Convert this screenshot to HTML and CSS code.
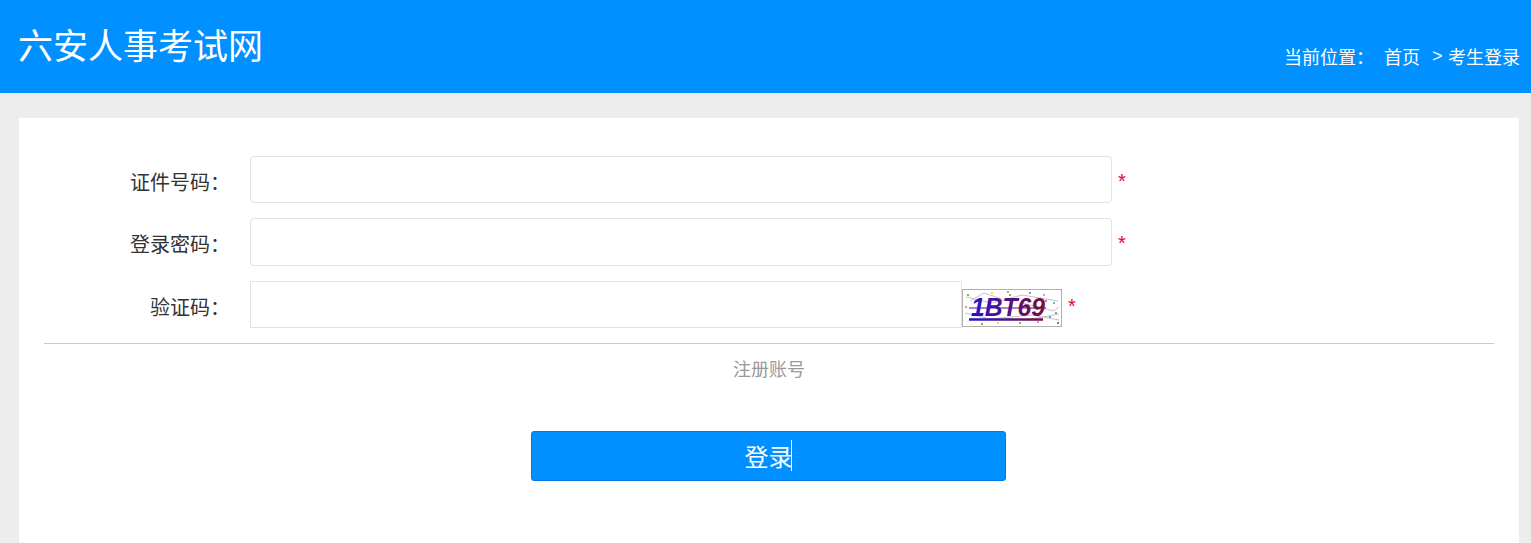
FILE: index.html
```html
<!DOCTYPE html>
<html lang="zh-CN">
<head>
<meta charset="utf-8">
<title>六安人事考试网</title>
<link rel="stylesheet" href="styles.css">
</head>
<body>
<header class="top">
  <h1 class="brand">六安人事考试网</h1>
  <nav class="crumbs"><span class="crumb-label">当前位置：</span><a class="crumb-home">首页</a><span class="crumb-sep">&gt;</span><span>考生登录</span></nav>
</header>
<main class="card">
  <form class="form">
    <div class="row">
      <label class="label">证件号码：</label>
      <input class="field" type="text">
      <span class="req">*</span>
    </div>
    <div class="row row-tall">
      <label class="label">登录密码：</label>
      <input class="field" type="password">
      <span class="req">*</span>
    </div>
    <div class="row">
      <label class="label">验证码：</label>
      <input class="field field-code" type="text">
      <svg class="captcha" width="100" height="38" viewBox="0 0 100 38">
        <rect x="0.5" y="0.5" width="99" height="37" fill="#fff" stroke="#b0b0b0"/>
        <g stroke="#c4c4c4" stroke-width="1" fill="none">
          <path d="M4 8 L30 14 L60 6 L96 12"/>
          <path d="M3 24 L28 30 L70 26 L97 31"/>
          <path d="M60 14 L92 22 L97 18"/>
          <path d="M8 12 L22 4 L40 10"/>
          <path d="M70 30 L97 25"/>
        </g>
        <g>
          <circle cx="6" cy="6" r="1" fill="#3a3"/><circle cx="14" cy="12" r="1" fill="#e66"/>
          <circle cx="30" cy="4" r="1" fill="#fb3"/><circle cx="48" cy="6" r="1" fill="#3a3"/>
          <circle cx="68" cy="4" r="1" fill="#66d"/><circle cx="82" cy="6" r="1" fill="#d6d"/>
          <circle cx="92" cy="14" r="1" fill="#3aa"/><circle cx="94" cy="24" r="1" fill="#3a3"/>
          <circle cx="84" cy="12" r="1" fill="#e44"/><circle cx="10" cy="30" r="1" fill="#3a3"/>
          <circle cx="36" cy="34" r="1" fill="#fb3"/><circle cx="58" cy="34" r="1" fill="#3a3"/>
          <circle cx="76" cy="33" r="1" fill="#d6d"/><circle cx="96" cy="34" r="1" fill="#366"/>
          <circle cx="4" cy="18" r="1" fill="#e66"/><circle cx="88" cy="28" r="1" fill="#66d"/>
          <circle cx="20" cy="35" r="1" fill="#3a3"/><circle cx="46" cy="3" r="1" fill="#e66"/>
        </g>
        <defs>
          <linearGradient id="ink" gradientUnits="userSpaceOnUse" x1="7" x2="84" y1="0" y2="0">
            <stop offset="0" stop-color="#2a10d0"/><stop offset="1" stop-color="#7a0f3a"/>
          </linearGradient>
        </defs>
        <text class="captcha-text" x="9" y="27" fill="url(#ink)" textLength="74" lengthAdjust="spacingAndGlyphs">1BT69</text>
        <path d="M7 19 H84" stroke="url(#ink)" stroke-width="1"/>
        <path d="M7 30.5 H81" stroke="url(#ink)" stroke-width="2.5"/>
      </svg>
      <span class="req">*</span>
    </div>
    <div class="reg"><a class="reg-link">注册账号</a></div>
    <div class="actions"><button class="submit" type="button"><span class="submit-text">登录<i class="caret"></i></span></button></div>
  </form>
</main>
</body>
</html>
```
FILE: styles.css
```css
* { box-sizing: border-box; }
html, body { margin: 0; height: 100%; overflow: hidden; }
body {
  background: #ededed;
  font-family: "Noto Sans CJK SC", "Liberation Sans", sans-serif;
  color: #333;
}
.top {
  height: 93px;
  background: #0090ff;
  color: #fff;
  display: flex;
  justify-content: space-between;
  padding: 0 11px 0 18px;
}
.brand {
  margin: 20px 0 0;
  font-size: 35px;
  line-height: 48px;
  font-weight: 400;
  white-space: nowrap;
}
.crumbs {
  margin-top: 43px;
  font-size: 18px;
  line-height: 26px;
  display: flex;
  white-space: nowrap;
}
.crumb-label { width: 100px; }
.crumb-home { width: 48px; }
.crumb-sep { width: 16px; font-family: "Liberation Sans", sans-serif; }
.card {
  margin: 25px 12px 0 19px;
  background: #fff;
  height: 430px;
  padding: 38px 25px 0;
}
.row {
  display: flex;
  align-items: center;
  height: 47px;
  margin-bottom: 15px;
}
.row-tall { height: 48px; }
.label {
  width: 186px;
  margin-right: 20px;
  text-align: right;
  font-size: 20px;
  color: #333;
  line-height: 28px;
  padding-top: 4px;
  flex: none;
}
.field {
  width: 862px;
  height: 100%;
  border: 1px solid #e2e2e2;
  border-radius: 4px;
  background: #fff;
  flex: none;
  outline: none;
}
.field-code { width: 712px; border-radius: 0; }
.req {
  margin-left: 6px;
  color: #e60033;
  font-size: 20px;
  font-family: "Liberation Sans", sans-serif;
  line-height: 22px;
  padding-top: 2px;
}
.captcha { display: block; flex: none; align-self: flex-end; margin-bottom: 1px; }
.captcha-text {
  font-family: "Liberation Sans", sans-serif;
  font-size: 26px;
  font-weight: 700;
  font-style: italic;
}
.reg {
  border-top: 1px solid #c8c8c8;
  text-align: center;
  padding-top: 11px;
  line-height: 26px;
}
.reg-link { font-size: 18px; color: #999; }
.actions { margin-top: 49px; display: flex; justify-content: center; padding-right: 1px; }
.submit {
  width: 475px;
  height: 50px;
  background: #0090ff;
  border: 1px solid #0078ee;
  border-radius: 3px;
  color: #fff;
  font-family: inherit;
  font-size: 24px;
  padding: 0 0 2px;
}
.submit-text { position: relative; }
.caret {
  position: absolute;
  right: 1px;
  top: 2px;
  bottom: 2px;
  width: 1px;
  background: #fff;
}
```
